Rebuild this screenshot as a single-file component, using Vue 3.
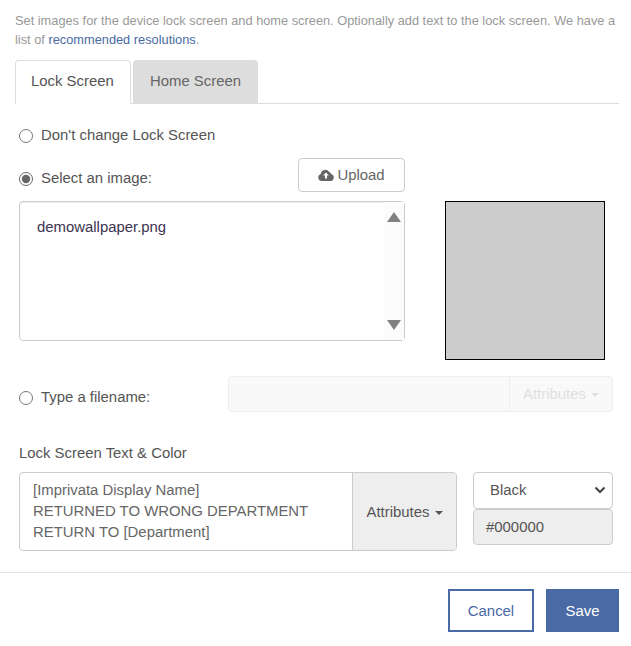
<template>
  <div class="dialog">
    <div class="body">
      <div class="desc">
        <div>Set images for the device lock screen and home screen. Optionally add text to the lock screen. We have a</div>
        <div><span>list of </span><a class="link">recommended resolutions</a><span>.</span></div>
      </div>

      <div class="tabs">
        <div class="tab active">Lock Screen</div>
        <div class="tab">Home Screen</div>
      </div>

      <div class="pane">
        <label class="radio-row first">
          <input type="radio" name="mode" />
          <span>Don't change Lock Screen</span>
        </label>

        <div class="select-block">
          <div class="picker">
            <div class="picker-head">
              <label class="radio-row">
                <input type="radio" name="mode" checked />
                <span>Select an image:</span>
              </label>
              <button class="upload">
                <svg class="cloud" viewBox="0 0 16 12" width="16" height="12">
                  <path fill="#666" fill-rule="evenodd" d="M4 12a3.600 3.600 0 0 1-1.300-7A4.600 4.600 0 0 1 11.200 3.100 2.300 2.300 0 0 1 13 4.900 3.600 3.600 0 0 1 12.400 12ZM8 3.400 5.200 6.500H7V9.500h2V6.500h1.800Z" />
                </svg>
                Upload
              </button>
            </div>
            <div class="listbox">
              <div class="file">demowallpaper.png</div>
              <div class="scroll">
                <span class="arrow up"></span>
                <span class="arrow down"></span>
              </div>
            </div>
          </div>
          <div class="preview"></div>
        </div>

        <div class="filename-row">
          <label class="radio-row">
            <input type="radio" name="mode" />
            <span>Type a filename:</span>
          </label>
          <div class="filename-group">
            <div class="filename-input"></div>
            <div class="filename-addon">Attributes <i class="caret"></i></div>
          </div>
        </div>

        <div class="text-label">Lock Screen Text &amp; Color</div>
        <div class="text-row">
          <div class="text-group">
            <div class="text-lines">
              <div v-for="line in lines" :key="line">{{ line }}</div>
            </div>
            <div class="text-addon">Attributes <i class="caret dark"></i></div>
          </div>
          <div class="color-col">
            <div class="select-wrap">
              <select class="color-select">
                <option>Black</option>
              </select>
              <svg class="chevron" viewBox="0 0 12 8" width="12" height="8">
                <path d="M1.500 1.500 6 6l4.500-4.500" fill="none" stroke="#444" stroke-width="2" />
              </svg>
            </div>
            <div class="color-hex">#000000</div>
          </div>
        </div>
      </div>
    </div>

    <div class="footer">
      <button class="btn cancel">Cancel</button>
      <button class="btn save">Save</button>
    </div>
  </div>
</template>

<script setup>
const lines = [
  '[Imprivata Display Name]',
  'RETURNED TO WRONG DEPARTMENT',
  'RETURN TO [Department]'
]
</script>

<style scoped>
.dialog {
  width: 631px;
  height: 646px;
  box-sizing: border-box;
  font-family: "Liberation Sans", Arial, sans-serif;
  font-size: 14.9px;
  color: #555;
  background: #fff;
  overflow: hidden;
}

.body {
  padding: 11px 12px 0 15px;
}

.desc {
  font-size: 12.8px;
  line-height: 19px;
  color: #999;
}

.link {
  color: #4a6aa5;
}

.tabs {
  display: flex;
  gap: 2px;
  margin-top: 11px;
  height: 43px;
  border-bottom: 1px solid #ddd;
}

.tab {
  width: 125px;
  box-sizing: border-box;
  padding-left: 17px;
  line-height: 42px;
  background: #ddd;
  color: #666;
  border-radius: 4px 4px 0 0;
}

.tab.active {
  width: 116px;
  padding-left: 15px;
  background: #fff;
  border: 1px solid #ddd;
  border-bottom: 0;
  height: 44px;
  line-height: 40px;
  color: #555;
}

.pane {
  padding-left: 4px;
}

.radio-row {
  display: flex;
  align-items: center;
  gap: 8px;
  color: #555;
}

.radio-row input {
  margin: 2px 0 0;
  width: 14px;
  height: 14px;
  accent-color: #666;
}

.radio-row.first {
  margin-top: 23px;
}

.select-block {
  display: flex;
  gap: 40px;
  align-items: flex-end;
  margin-top: 15px;
}

.picker {
  width: 386px;
}

.picker-head {
  display: flex;
  justify-content: space-between;
  align-items: center;
  height: 34px;
}

.picker-head .radio-row {
  margin-top: 6px;
}

.upload {
  display: flex;
  align-items: center;
  justify-content: center;
  gap: 3px;
  width: 107px;
  height: 34px;
  background: #fff;
  border: 1px solid #ccc;
  border-radius: 4px;
  font: inherit;
  color: #666;
}

.listbox {
  display: flex;
  justify-content: space-between;
  height: 140px;
  box-sizing: border-box;
  margin-top: 9px;
  border: 1px solid #ccc;
  border-radius: 4px;
  box-shadow: inset 0 1px 1px rgba(0, 0, 0, 0.075);
}

.file {
  padding: 17px 0 0 17px;
  color: #3c3450;
}

.scroll {
  width: 20px;
  display: flex;
  flex-direction: column;
  justify-content: space-between;
  align-items: center;
  padding: 10px 0 10px;
  background: #fcfcfc;
}

.arrow {
  width: 0;
  height: 0;
  border-left: 7px solid transparent;
  border-right: 7px solid transparent;
}

.arrow.up {
  border-bottom: 10px solid #808080;
}

.arrow.down {
  border-top: 10px solid #808080;
}

.preview {
  width: 160px;
  height: 159px;
  box-sizing: border-box;
  margin-bottom: -19px;
  background: #ccc;
  border: 1px solid #000;
}

.filename-row {
  display: flex;
  align-items: center;
  margin-top: 35px;
  height: 36px;
}

.filename-row .radio-row {
  width: 209px;
  flex: none;
  margin-top: 6px;
}

.filename-group {
  display: flex;
  width: 385px;
  height: 36px;
  box-sizing: border-box;
  background: #f9f9f9;
  border: 1px solid #eee;
  border-radius: 4px;
}

.filename-input {
  flex: 1;
}

.filename-addon {
  width: 103px;
  box-sizing: border-box;
  border-left: 1px solid #eee;
  line-height: 34px;
  text-align: center;
  color: #e0e0e0;
}

.caret {
  display: inline-block;
  width: 0;
  height: 0;
  margin-left: 1px;
  vertical-align: middle;
  border-top: 4px solid #e0e0e0;
  border-left: 4px solid transparent;
  border-right: 4px solid transparent;
}

.caret.dark {
  border-top-color: #555;
}

.text-label {
  margin-top: 33px;
  color: #555;
}

.text-row {
  display: flex;
  gap: 16px;
  margin-top: 11px;
}

.text-group {
  display: flex;
  width: 438px;
  height: 79px;
  box-sizing: border-box;
  border: 1px solid #ccc;
  border-radius: 4px;
  overflow: hidden;
}

.text-lines {
  flex: 1;
  padding: 7px 0 0 13px;
  line-height: 21px;
  color: #666;
}

.text-addon {
  width: 104px;
  box-sizing: border-box;
  background: #eee;
  border-left: 1px solid #ccc;
  line-height: 78px;
  text-align: center;
  color: #555;
}

.color-col {
  width: 140px;
  display: flex;
  flex-direction: column;
}

.select-wrap {
  position: relative;
  height: 37px;
}

.color-select {
  appearance: none;
  display: block;
  width: 100%;
  height: 37px;
  box-sizing: border-box;
  padding: 0 0 2px 16px;
  background: #fff;
  border: 1px solid #ccc;
  border-radius: 4px;
  font: inherit;
  color: #555;
}

.chevron {
  position: absolute;
  right: 7px;
  top: 14px;
  pointer-events: none;
}

.color-hex {
  height: 36px;
  box-sizing: border-box;
  padding-left: 12px;
  background: #eee;
  border: 1px solid #ccc;
  border-radius: 4px;
  line-height: 34px;
  color: #555;
}

.footer {
  display: flex;
  justify-content: flex-end;
  gap: 12px;
  margin-top: 21px;
  padding: 16px 12px 0 0;
  border-top: 1px solid #e5e5e5;
}

.btn {
  height: 43px;
  box-sizing: border-box;
  font: inherit;
}

.cancel {
  width: 86px;
  background: #fff;
  border: 2px solid #4a6aa5;
  color: #4a6aa5;
}

.save {
  width: 73px;
  background: #4a6aa5;
  border: 0;
  color: #fff;
  font-weight: 400;
}
</style>

<style>
html, body {
  margin: 0;
  background: #fff;
}
</style>
